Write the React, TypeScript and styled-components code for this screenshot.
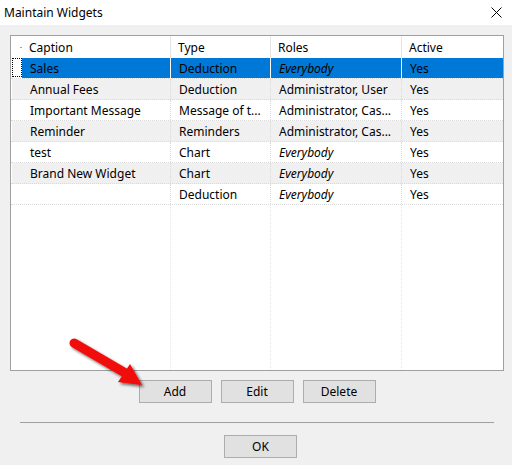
import { memo } from 'react';
import styled, { createGlobalStyle } from 'styled-components';

interface Widget {
  caption: string;
  type: string;
  roles: string;
  everybody?: boolean;
  active: string;
}

const WIDGETS: Widget[] = [
  { caption: 'Sales', type: 'Deduction', roles: 'Everybody', everybody: true, active: 'Yes' },
  { caption: 'Annual Fees', type: 'Deduction', roles: 'Administrator, User', active: 'Yes' },
  { caption: 'Important Message', type: 'Message of t...', roles: 'Administrator, Cas...', active: 'Yes' },
  { caption: 'Reminder', type: 'Reminders', roles: 'Administrator, Cas...', active: 'Yes' },
  { caption: 'test', type: 'Chart', roles: 'Everybody', everybody: true, active: 'Yes' },
  { caption: 'Brand New Widget', type: 'Chart', roles: 'Everybody', everybody: true, active: 'Yes' },
  { caption: '', type: 'Deduction', roles: 'Everybody', everybody: true, active: 'Yes' },
];

const COLS = '11px 149px 100px 131px 101px';
const FONT = "'Noto Sans', 'Open Sans', sans-serif";

const GLOBAL = createGlobalStyle`
  html, body {
    margin: 0;
    padding: 0;
    background: #f0f0f0;
  }
  body {
    font-family: ${FONT};
    font-size: 12px;
    color: #000;
  }
`;

const WINDOW = styled.div`
  position: relative;
  width: 512px;
  height: 465px;
  background: #f0f0f0;
  overflow: hidden;
`;
const TITLE_BAR = styled.div`
  height: 25px;
  background: #fff;
  display: flex;
  align-items: center;
  justify-content: space-between;
  padding: 0 10px 0 4px;
`;
const TITLE = styled.span`
  font-size: 12px;
  color: #000;
`;
const BODY = styled.div`
  display: flex;
  flex-direction: column;
  padding: 10px 8px 0 10px;
`;
const GRID = styled.div`
  height: 336px;
  border: 1px solid #a0a0a0;
  background: #fff;
  box-sizing: border-box;
`;
const ROW = styled.div<{ $alt?: boolean }>`
  display: grid;
  grid-template-columns: ${COLS};
  height: 21px;
  background: ${(p) => (p.$alt ? '#f0f0f0' : '#fff')};
  border-bottom: 1px dotted #dadada;
  box-sizing: border-box;
`;
const HEADER = styled.div`
  display: grid;
  grid-template-columns: ${COLS};
  height: 22px;
  background: #fff;
`;
const HEAD_CELL = styled.div`
  display: flex;
  align-items: center;
  padding-left: 7px;
  border-right: 1px solid #e5e5e5;
  white-space: nowrap;
  overflow: hidden;
  &:last-child {
    border-right: none;
  }
`;
const INDICATOR = styled.div<{ $focus?: boolean; $alt?: boolean }>`
  position: relative;
  background: ${(p) => (p.$alt ? '#f0f0f0' : '#fff')};
  border-left: 1px solid #fff;
  &::after {
    content: '';
    display: ${(p) => (p.$focus ? 'block' : 'none')};
    position: absolute;
    inset: 0 0 1px 0;
    border: 1px dotted #000;
  }
`;
const HEAD_MARK = styled.div`
  position: relative;
  &::after {
    content: '';
    position: absolute;
    right: 0;
    top: 11px;
    width: 2px;
    height: 1px;
    background: #a0a0a0;
  }
`;
const CELL = styled.div<{ $selected?: boolean; $italic?: boolean }>`
  display: flex;
  align-items: center;
  padding-left: 8px;
  white-space: nowrap;
  overflow: hidden;
  font-style: ${(p) => (p.$italic ? 'italic' : 'normal')};
  background: ${(p) => (p.$selected ? '#0078d7' : 'transparent')};
  border-right: 1px ${(p) => (p.$selected ? 'solid #fff' : 'dotted #dadada')};
  &:last-child {
    border-right: none;
  }
`;
const FILLER = styled.div`
  display: grid;
  grid-template-columns: ${COLS};
  height: 165px;
`;
const FILL_COL = styled.div`
  border-right: 1px dotted #e6e6e6;
  &:first-child,
  &:last-child {
    border-right: none;
  }
`;
const BUTTONS = styled.div<{ $shift?: number; $top?: number }>`
  display: flex;
  justify-content: center;
  gap: 9px;
  margin-top: ${(p) => p.$top ?? 0}px;
  padding-left: ${(p) => p.$shift ?? 0}px;
`;
const BUTTON = styled.button`
  width: 73px;
  height: 23px;
  padding: 0;
  background: #e1e1e1;
  border: 1px solid #adadad;
  font-family: ${FONT};
  font-size: 12px;
  color: #000;
`;
const SEPARATOR = styled.hr`
  width: 474px;
  margin: 19px 0 12px 10px;
  border: none;
  border-top: 1px solid #a0a0a0;
`;
const ARROW = styled.svg`
  position: absolute;
  left: 0;
  top: 0;
  pointer-events: none;
`;

function CloseIcon() {
  return (
    <svg width="11" height="11" viewBox="0 0 11 11">
      <path d="M0.5 0.5 L10.5 10.5 M10.5 0.5 L0.5 10.5" stroke="#000" strokeWidth="1" fill="none" />
    </svg>
  );
}

function App(): React.ReactElement {
  return (
    <WINDOW>
      <GLOBAL />
      <TITLE_BAR>
        <TITLE>Maintain Widgets</TITLE>
        <CloseIcon />
      </TITLE_BAR>
      <BODY>
        <GRID>
          <HEADER>
            <HEAD_MARK />
            <HEAD_CELL>Caption</HEAD_CELL>
            <HEAD_CELL>Type</HEAD_CELL>
            <HEAD_CELL>Roles</HEAD_CELL>
            <HEAD_CELL>Active</HEAD_CELL>
          </HEADER>
          {WIDGETS.map((w, i) => {
            const alt = i % 2 === 1;
            const selected = i === 0;
            return (
              <ROW key={i} $alt={alt}>
                <INDICATOR $focus={selected} $alt={alt} />
                <CELL $selected={selected}>{w.caption}</CELL>
                <CELL $selected={selected}>{w.type}</CELL>
                <CELL $selected={selected} $italic={w.everybody}>
                  {w.roles}
                </CELL>
                <CELL $selected={selected}>{w.active}</CELL>
              </ROW>
            );
          })}
          <FILLER>
            <FILL_COL />
            <FILL_COL />
            <FILL_COL />
            <FILL_COL />
            <FILL_COL />
          </FILLER>
        </GRID>
        <BUTTONS $top={9}>
          <BUTTON>Add</BUTTON>
          <BUTTON>Edit</BUTTON>
          <BUTTON>Delete</BUTTON>
        </BUTTONS>
        <SEPARATOR />
        <BUTTONS $shift={7}>
          <BUTTON>OK</BUTTON>
        </BUTTONS>
      </BODY>
      <ARROW width="512" height="465">
        <defs>
          <filter id="shadow" x="-20%" y="-20%" width="140%" height="140%">
            <feGaussianBlur in="SourceAlpha" stdDeviation="1.5" />
            <feOffset dx="2" dy="2" />
            <feComponentTransfer>
              <feFuncA type="linear" slope="0.6" />
            </feComponentTransfer>
            <feMerge>
              <feMergeNode />
              <feMergeNode in="SourceGraphic" />
            </feMerge>
          </filter>
        </defs>
        <g filter="url(#shadow)">
          <line x1="74" y1="343" x2="127" y2="374" stroke="#f20a0a" strokeWidth="9" strokeLinecap="round" />
          <polygon points="142,385 118,382 130,364" fill="#f20a0a" />
        </g>
      </ARROW>
    </WINDOW>
  );
}

export default memo(App);
